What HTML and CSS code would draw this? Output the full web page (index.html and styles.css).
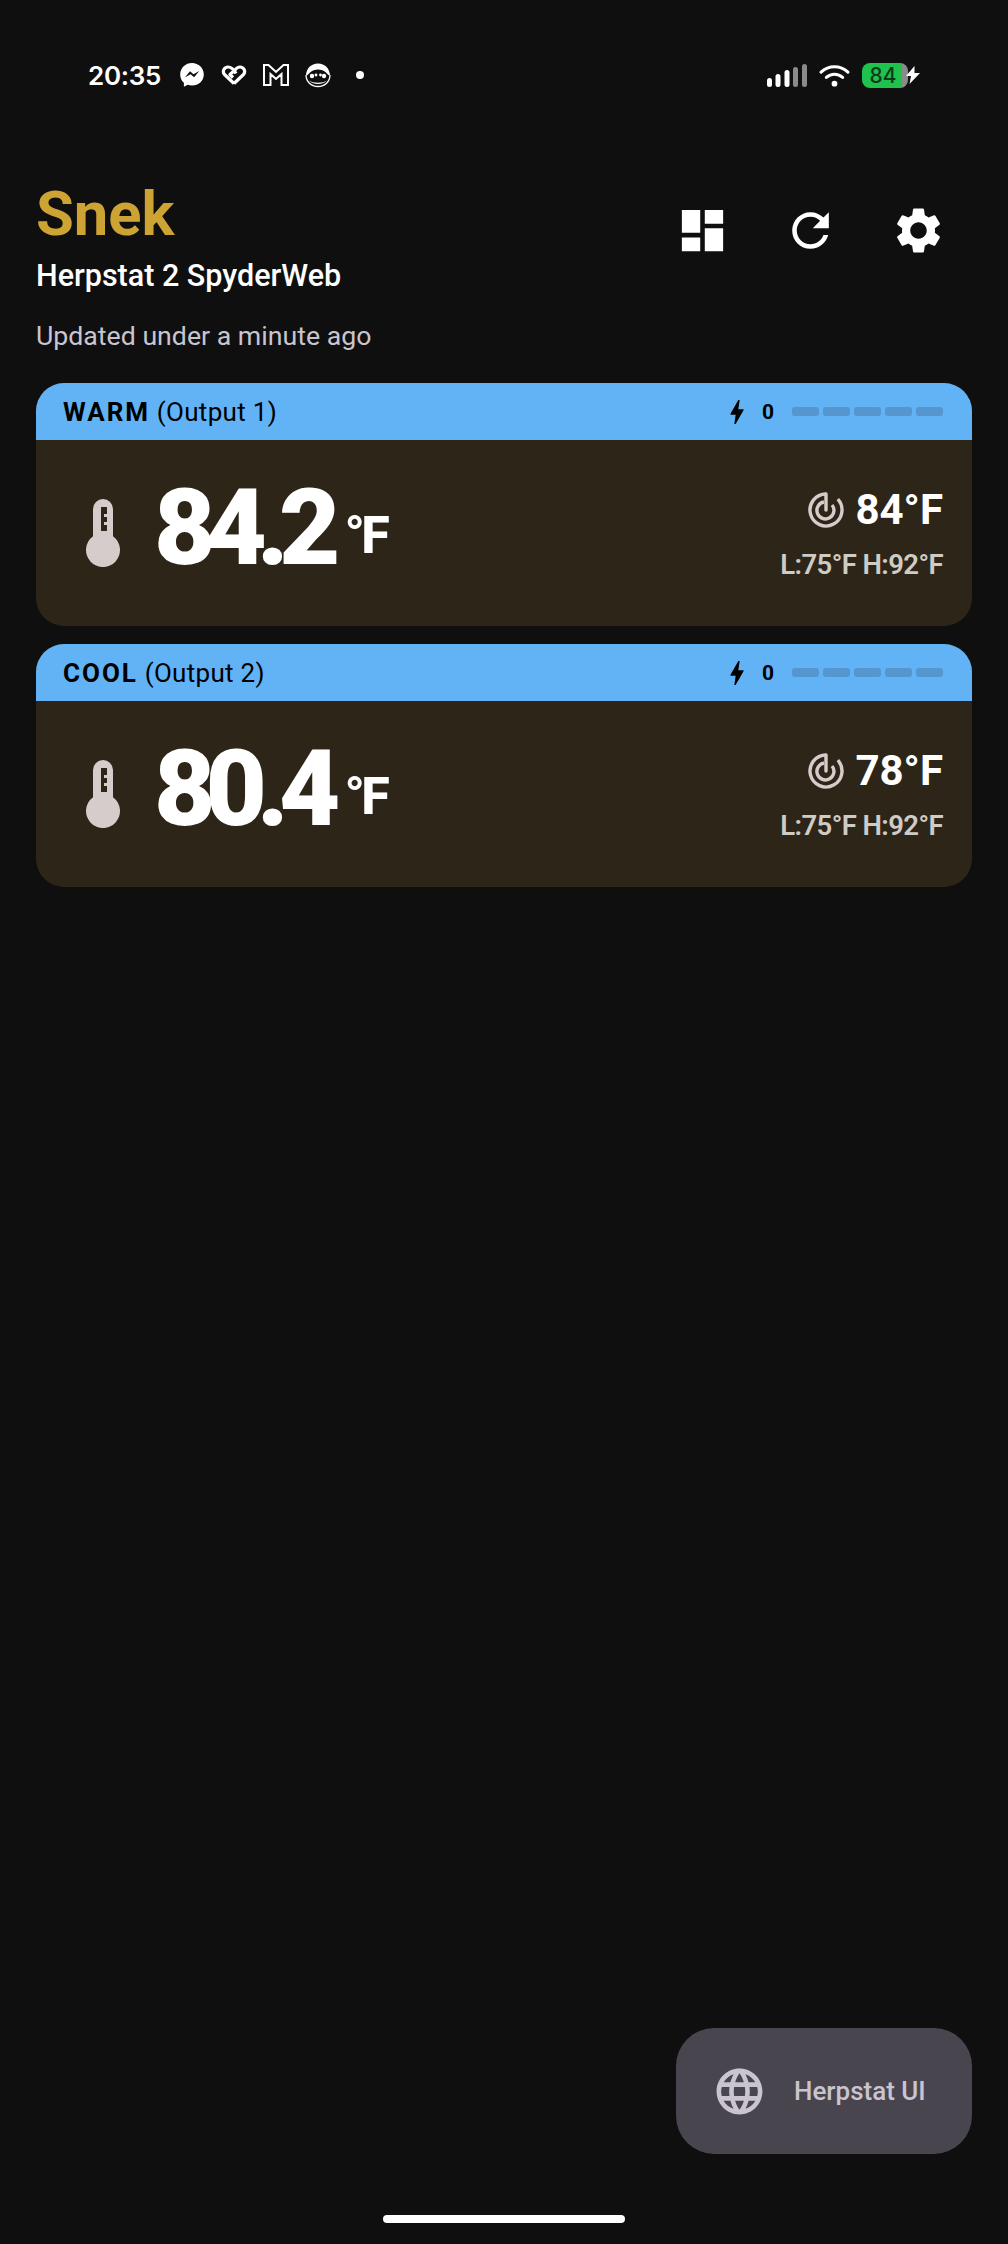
FILE: index.html
```html
<!DOCTYPE html>
<html lang="en">
<head>
<meta charset="utf-8">
<title>Snek</title>
<link rel="stylesheet" href="styles.css">
</head>
<body>
<div class="screen">
  <div class="status">
    <div class="status-left">
      <span class="clock">20:35</span>
      <svg class="st-icon" viewBox="0 0 26 26"><path fill="#fff" d="M13 1C6.400 1 1.200 5.900 1.200 12.400c0 3.400 1.400 6.300 3.700 8.300v4.100l3.800-2.100c1.300.5 2.800.7 4.300.7 6.600 0 11.800-4.600 11.800-11S19.600 1 13 1z"/><path fill="#0f0f0f" d="M5.800 15.600l5.200-6.300 3.500 2.900 5.800-3.300-5.200 6.400-3.500-3z"/></svg>
      <svg class="st-icon" viewBox="0 0 26 26"><path fill="none" stroke="#fff" stroke-width="3.200" stroke-linejoin="round" d="M13 21.500L3.500 12.500C1 9.500 3 5 7 5c3 0 6 3 8 6.500M13 21.500l9.500-9C25 9.500 23 5 19 5c-2 0-3.500 1-5 3L9 12.500l3 3"/></svg>
      <svg class="st-icon" viewBox="0 0 26 26"><path fill="none" stroke="#fff" stroke-width="2" d="M1 3h4.500L13 10l7.500-7H25v20h-6.500V12L13 17 7.500 12v11H1z"/></svg>
      <svg class="st-icon" viewBox="0 0 26 26"><path fill="#fff" d="M13 1.500C6 1.500 1.500 6.500 1 13c1.500 1 2.500-1 4-2.500 2-1.800 5-3 8-3s6 1.200 8 3c1.500 1.500 2.500 3.500 4 2.500-.5-6.500-5-11.500-12-11.500z"/><path fill="none" stroke="#fff" stroke-width="1.300" d="M1 13c0 6.500 5 11.500 12 11.500S25 19.500 25 13"/><circle cx="7" cy="14" r="2.200" fill="#fff"/><circle cx="19" cy="14" r="2.200" fill="#fff"/><circle cx="11" cy="13" r="1.400" fill="#fff"/><circle cx="15.500" cy="13" r="1.400" fill="#fff"/><path fill="#fff" d="M4 18.500c4 3 14 3 18 0-3 4.500-15 4.500-18 0z"/></svg>
      <span class="dot"></span>
    </div>
    <div class="status-right">
      <svg class="signal" viewBox="0 0 40 23"><g fill="#fff"><rect x="0" y="14" width="5" height="9" rx="2.500"/><rect x="8.500" y="10" width="5" height="13" rx="2.500"/><rect x="17.500" y="6" width="5" height="17" rx="2.500"/></g><g fill="#8a8a8a"><rect x="26" y="3" width="5" height="20" rx="2.500"/><rect x="35" y="0" width="5" height="23" rx="2.500"/></g></svg>
      <svg class="wifi" viewBox="0 0 32 24"><g fill="none" stroke="#fff" stroke-width="3.200" stroke-linecap="round"><path d="M2 8.500C10 1 22 1 30 8.500"/><path d="M7.500 14c5-4.500 12-4.500 17 0"/></g><circle cx="16" cy="20.500" r="3" fill="#fff"/></svg>
      <div class="battery"><span class="battery-fill">84</span><span class="battery-rest"></span></div>
      <svg class="charge" viewBox="0 0 14 18"><path fill="#fff" d="M8.500 0L0 10h5l-1.500 8L14 7H8.500z"/></svg>
    </div>
  </div>

  <header class="top">
    <div class="titles">
      <h1 class="name">Snek</h1>
      <div class="device">Herpstat 2 SpyderWeb</div>
      <div class="updated">Updated under a minute ago</div>
    </div>
    <div class="actions">
      <span class="action"><svg viewBox="0 0 24 24"><path d="M3 13h8V3H3v10zm0 8h8v-6H3v6zm10 0h8V11h-8v10zm0-18v6h8V3h-8z"/></svg></span>
      <span class="action"><svg viewBox="0 0 24 24"><path d="M17.65 6.35C16.2 4.9 14.21 4 12 4c-4.42 0-7.99 3.58-7.99 8s3.57 8 7.99 8c3.73 0 6.84-2.55 7.73-6h-2.08c-.82 2.33-3.04 4-5.65 4-3.31 0-6-2.69-6-6s2.69-6 6-6c1.66 0 3.14.69 4.22 1.78L13 11h7V4l-2.35 2.35z"/></svg></span>
      <span class="action"><svg viewBox="0 0 24 24"><path d="M19.14 12.94c.04-.3.06-.61.06-.94 0-.32-.02-.64-.07-.94l2.03-1.58c.18-.14.23-.41.12-.61l-1.92-3.32c-.12-.22-.37-.29-.59-.22l-2.39.96c-.5-.38-1.03-.7-1.62-.94l-.36-2.54c-.04-.24-.24-.41-.48-.41h-3.84c-.24 0-.43.17-.47.41l-.36 2.54c-.59.24-1.13.57-1.62.94l-2.39-.96c-.22-.08-.47 0-.59.22L2.74 8.87c-.12.21-.08.47.12.61l2.03 1.58c-.05.3-.09.63-.09.94s.02.64.07.94l-2.03 1.58c-.18.14-.23.41-.12.61l1.92 3.32c.12.22.37.29.59.22l2.39-.96c.5.38 1.03.7 1.62.94l.36 2.54c.05.24.24.41.48.41h3.84c.24 0 .44-.17.47-.41l.36-2.54c.59-.24 1.13-.56 1.62-.94l2.39.96c.22.08.47 0 .59-.22l1.92-3.32c.12-.22.07-.47-.12-.61l-2.01-1.58zM12 15.6c-1.98 0-3.6-1.62-3.6-3.6s1.62-3.6 3.6-3.6 3.6 1.62 3.6 3.6-1.62 3.6-3.6 3.6z"/></svg></span>
    </div>
  </header>

  <main class="cards">
    <section class="card">
      <div class="card-head">
        <div class="card-title"><b>WARM</b> (Output 1)</div>
        <div class="power">
          <svg class="bolt" viewBox="0 0 24 24"><path d="M11 21h-1l1-7H7.500c-.58 0-.57-.32-.38-.66.19-.34.05-.08.07-.12C8.480 10.940 10.420 7.540 13 3h1l-1 7h3.500c.49 0 .56.33.47.51l-.07.15C12.960 17.550 11 21 11 21z"/></svg>
          <span class="power-val">0</span>
          <div class="bars"><i></i><i></i><i></i><i></i><i></i></div>
        </div>
      </div>
      <div class="card-body">
        <div class="reading">
          <svg class="therm" viewBox="0 0 36 68"><path fill-rule="evenodd" fill="#d7cccc" d="M8 10a10 10 0 0 1 20 0v27.300a17 17 0 1 1-20 0zM16 8v24h6v-6h-3v-3h3v-5h-3v-3h3V8z"/></svg>
          <div class="temp">84.2</div>
          <div class="unit">°F</div>
        </div>
        <div class="side">
          <div class="target">
            <svg class="radar" viewBox="0 0 36 36"><g fill="none" stroke="#d7cccc" stroke-width="3.400"><path d="M18 2a16 16 0 1 0 11.800 5.200"/><path d="M16 10a8.500 8.500 0 1 0 8 3"/><path d="M18 2v16" stroke-linecap="round"/></g></svg>
            <span>84°F</span>
          </div>
          <div class="range">L:75°F H:92°F</div>
        </div>
      </div>
    </section>
    <section class="card">
      <div class="card-head">
        <div class="card-title"><b>COOL</b> (Output 2)</div>
        <div class="power">
          <svg class="bolt" viewBox="0 0 24 24"><path d="M11 21h-1l1-7H7.500c-.58 0-.57-.32-.38-.66.19-.34.05-.08.07-.12C8.480 10.940 10.420 7.540 13 3h1l-1 7h3.500c.49 0 .56.33.47.51l-.07.15C12.960 17.550 11 21 11 21z"/></svg>
          <span class="power-val">0</span>
          <div class="bars"><i></i><i></i><i></i><i></i><i></i></div>
        </div>
      </div>
      <div class="card-body">
        <div class="reading">
          <svg class="therm" viewBox="0 0 36 68"><path fill-rule="evenodd" fill="#d7cccc" d="M8 10a10 10 0 0 1 20 0v27.300a17 17 0 1 1-20 0zM16 8v24h6v-6h-3v-3h3v-5h-3v-3h3V8z"/></svg>
          <div class="temp">80.4</div>
          <div class="unit">°F</div>
        </div>
        <div class="side">
          <div class="target">
            <svg class="radar" viewBox="0 0 36 36"><g fill="none" stroke="#d7cccc" stroke-width="3.400"><path d="M18 2a16 16 0 1 0 11.800 5.200"/><path d="M16 10a8.500 8.500 0 1 0 8 3"/><path d="M18 2v16" stroke-linecap="round"/></g></svg>
            <span>78°F</span>
          </div>
          <div class="range">L:75°F H:92°F</div>
        </div>
      </div>
    </section>
  </main>

  <button class="fab">
    <svg viewBox="0 0 24 24"><path d="M11.99 2C6.47 2 2 6.48 2 12s4.47 10 9.99 10C17.52 22 22 17.52 22 12S17.52 2 11.99 2zm6.93 6h-2.95c-.32-1.25-.78-2.45-1.38-3.56 1.84.63 3.37 1.91 4.33 3.56zM12 4.040c.83 1.2 1.48 2.530 1.910 3.960h-3.820c.43-1.430 1.080-2.760 1.910-3.960zM4.260 14C4.100 13.360 4 12.690 4 12s.1-1.360.26-2h3.380c-.08.66-.14 1.320-.14 2 0 .68.06 1.340.14 2H4.260zm.82 2h2.950c.32 1.250.78 2.450 1.380 3.560-1.840-.63-3.370-1.900-4.330-3.560zm2.950-8H5.080c.96-1.660 2.490-2.930 4.330-3.560C8.810 5.550 8.350 6.750 8.030 8zM12 19.960c-.83-1.200-1.480-2.530-1.910-3.960h3.820c-.43 1.430-1.080 2.760-1.910 3.960zM14.340 14H9.660c-.09-.66-.16-1.320-.16-2 0-.68.07-1.350.16-2h4.680c.09.65.16 1.320.16 2 0 .68-.07 1.340-.16 2zm.25 5.560c.6-1.110 1.060-2.310 1.380-3.560h2.950c-.96 1.650-2.490 2.930-4.330 3.560zM16.360 14c.08-.66.14-1.320.14-2 0-.68-.06-1.340-.14-2h3.380c.16.64.26 1.310.26 2s-.1 1.360-.26 2h-3.380z"/></svg>
    <span>Herpstat UI</span>
  </button>
  <div class="home"></div>
</div>
</body>
</html>
```
FILE: styles.css
```css
* { box-sizing: border-box; }
html, body { margin: 0; padding: 0; }
body { background: #0f0f0f; font-family: Roboto, "Noto Sans", sans-serif; color: #fff; }
.screen { position: relative; width: 1008px; height: 2244px; overflow: hidden; background: #0f0f0f; padding-top: 57px; }

.status { display: flex; justify-content: space-between; align-items: center; height: 36px; padding: 0 88px; }
.status-left { display: flex; align-items: center; }
.clock { font-family: Inter, Roboto, sans-serif; font-size: 26px; font-weight: 600; width: 91px; letter-spacing: -.3px; }
.st-icon { width: 26px; height: 26px; margin-right: 16px; }
.dot { width: 8px; height: 8px; border-radius: 50%; background: #fff; margin-left: 9px; }
.status-right { display: flex; align-items: center; }
.signal { width: 40px; height: 23px; margin-right: 12px; }
.wifi { width: 31px; height: 23px; margin-right: 12px; }
.battery { display: flex; height: 25px; width: 46px; border-radius: 8px; overflow: hidden; }
.battery-fill { width: 40px; background: #1fc24c; color: #0f3a1c; font-family: Inter, Roboto, sans-serif; font-size: 21px; font-weight: 500; line-height: 25px; text-align: center; padding-left: 2px; }
.battery-rest { flex: 1; background: #8a8a8a; }
.charge { width: 14px; height: 18px; margin-left: -2px; position: relative; }

.top { display: flex; justify-content: space-between; padding: 0 36px; }
.titles { display: flex; flex-direction: column; padding-top: 88px; }
.name { margin: 0; font-size: 61.500px; font-weight: 700; line-height: 66px; color: #cda434; }
.device { font-size: 30.500px; font-weight: 500; line-height: 40px; margin-top: 9px; }
.updated { font-size: 26.700px; line-height: 36px; margin-top: 22px; color: #c9c5d0; }
.actions { display: flex; align-items: center; height: 108px; margin-top: 83px; }
.action { display: flex; justify-content: center; align-items: center; width: 108px; height: 108px; }
.action svg { width: 55px; height: 55px; fill: #fff; }

.cards { display: flex; flex-direction: column; gap: 18px; padding: 0 36px; margin-top: 29px; }
.card { border-radius: 28px; overflow: hidden; background: #2d2518; }
.card-head { display: flex; align-items: center; justify-content: space-between; height: 57px; padding: 0 29px 0 27px; background: #61b3f6; color: #000; }
.card-title { font-size: 26px; letter-spacing: .3px; }
.card-title b { font-weight: 700; letter-spacing: 2px; }
.power { display: flex; align-items: center; }
.bolt { width: 32px; height: 32px; fill: #000; margin-right: 9px; }
.power-val { font-size: 21px; font-weight: 700; margin-right: 18px; }
.bars { display: flex; gap: 4px; }
.bars i { display: block; width: 27px; height: 9px; border-radius: 3px; background: #5596cf; }
.card-body { display: flex; justify-content: space-between; align-items: center; height: 186px; padding: 0 29px 0 49px; }
.reading { display: flex; align-items: center; }
.therm { width: 36px; height: 68px; margin-right: 33px; }
.temp { font-size: 106px; font-weight: 900; letter-spacing: -10px; line-height: 106px; margin-top: -10px; }
.unit { font-size: 52px; font-weight: 800; margin-left: 14px; letter-spacing: -3.500px; margin-top: 4px; }
.side { display: flex; flex-direction: column; align-items: flex-end; }
.target { display: flex; align-items: center; font-size: 42px; font-weight: 700; }
.radar { width: 36px; height: 36px; margin-right: 11px; }
.range { font-size: 27.500px; font-weight: 600; color: #cfcbc5; margin-top: 14px; letter-spacing: -.6px; }

.fab { position: absolute; left: 676px; top: 2028px; width: 296px; height: 126px; border: 0; border-radius: 38px; background: #48454e; display: flex; align-items: center; padding: 0 0 0 36px; color: #cac4d0; font-family: Roboto, sans-serif; font-size: 26px; font-weight: 500; }
.fab svg { width: 55px; height: 55px; fill: #cac4d0; flex: none; margin-right: 27px; }
.home { position: absolute; left: 383px; top: 2215px; width: 242px; height: 8px; border-radius: 4px; background: #fff; }
```
